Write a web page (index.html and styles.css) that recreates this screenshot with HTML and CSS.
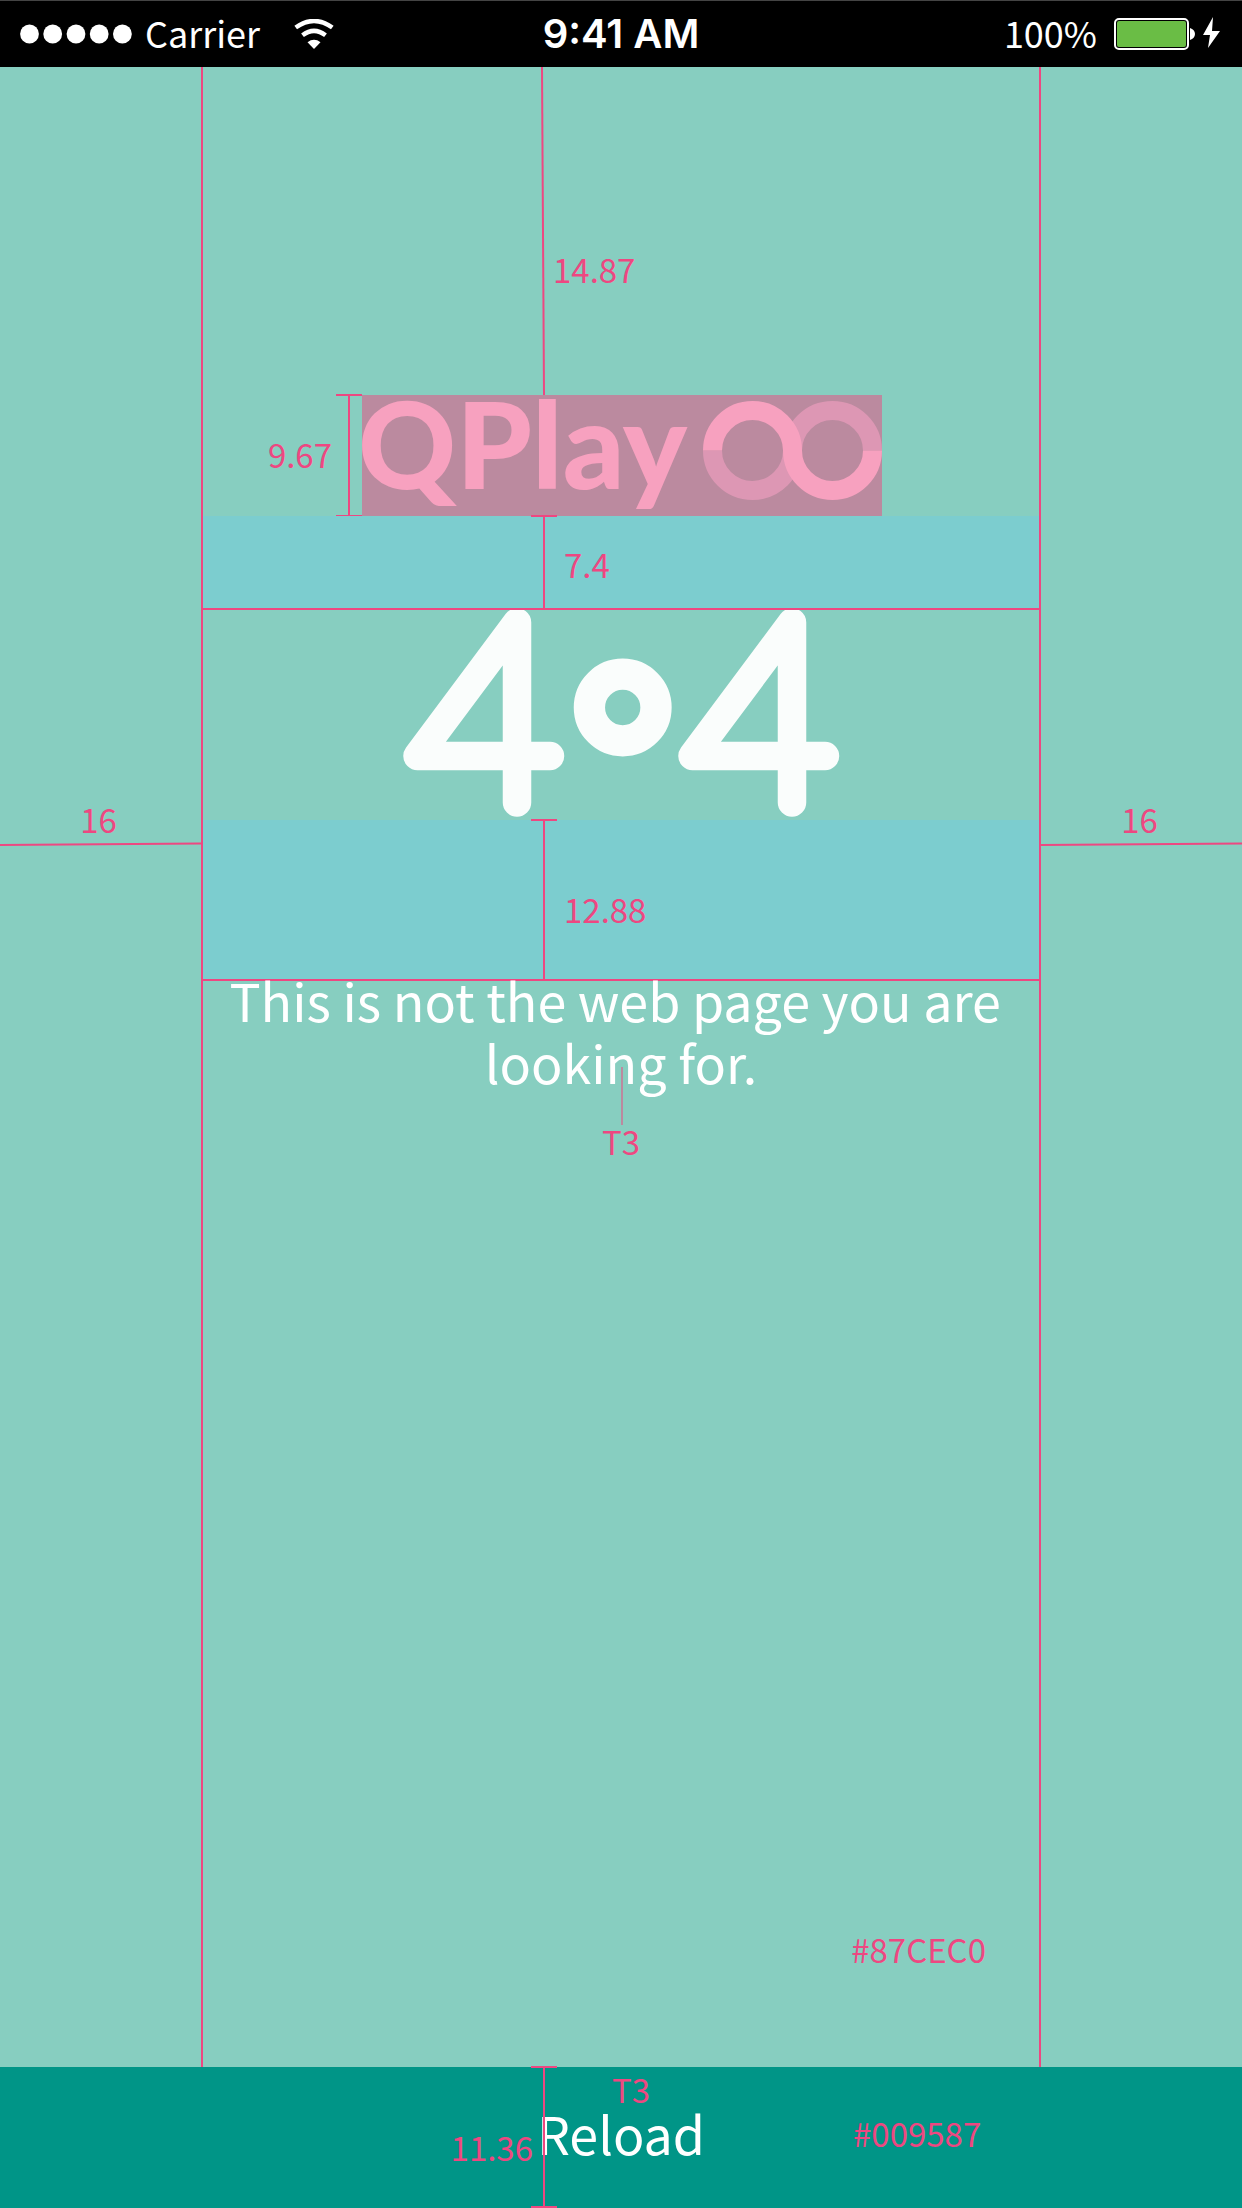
FILE: index.html
```html
<!DOCTYPE html>
<html lang="en">
<head>
<meta charset="utf-8">
<meta name="viewport" content="width=device-width, initial-scale=1">
<title>QPlay 404</title>
<link rel="stylesheet" href="styles.css">
</head>
<body>
<header class="status">
  <div class="status-left">
    <svg class="signal" width="112" height="20" viewBox="0 0 112 20" aria-hidden="true"><circle cx="9.5" cy="10" r="9.4"/><circle cx="32.7" cy="10" r="9.4"/><circle cx="56" cy="10" r="9.4"/><circle cx="79.2" cy="10" r="9.4"/><circle cx="102.4" cy="10" r="9.4"/></svg>
    <span class="carrier">Carrier</span>
    <svg class="wifi" width="40" height="30" viewBox="0 0 40 30" aria-hidden="true"><path d="M1.7 8.5Q20-4.5 38.300 8.500M8.500 16.300Q20 7.500 31.500 16.300" fill="none" stroke="#fff" stroke-width="4.500"/><path d="M13.500 23.200Q20 18.500 26.500 23.200L20 30Z"/></svg>
  </div>
  <time class="clock">9:41 AM</time>
  <div class="status-right">
    <span class="carrier">100%</span>
    <svg class="battery" width="108" height="36" viewBox="0 0 108 36" aria-hidden="true"><rect x="1" y="3" width="73" height="30" rx="4" fill="none" stroke="#fff" stroke-width="2"/><rect x="3" y="5" width="69" height="26" rx="2" fill="#6abd45"/><path d="M76 12c3 1 5 3 5 6s-2 5-5 6Z"/><path d="M99 1L89 19h7l-2 13L106 15h-8Z"/></svg>
  </div>
</header>

<main class="board">
  <aside class="side">
    <span class="note">16</span>
    <svg class="side-line" height="4" viewBox="0 0 201 4" preserveAspectRatio="none" aria-hidden="true"><path d="M0 3L201 1.500"/></svg>
  </aside>

  <div class="column">
    <div class="space-top">
      <svg class="lead" width="4" height="328" viewBox="0 0 4 328" aria-hidden="true"><path d="M1 0L3 328"/></svg>
      <span class="note note-top">14.87</span>
    </div>

    <div class="logo" role="img" aria-label="QPlay">
      <span class="wordmark">QPlay</span>
      <svg class="loops" width="180" height="100" viewBox="0 0 180 100" aria-hidden="true"><g fill="none" stroke-width="19"><path stroke="#dd97b4" d="M10.500 50.500a40 40 0 0 0 80 0a40 40 0 0 1 80 0"/><path stroke="#f7a1bf" d="M10.500 50.500a40 40 0 0 1 80 0a40 40 0 0 0 80 0"/></g></svg>
      <span class="bracket"></span>
      <span class="note note-logo">9.67</span>
    </div>

    <div class="band band-short">
      <span class="post"></span>
      <span class="note note-band">7.4</span>
    </div>

    <div class="art">
      <svg width="438" height="209" viewBox="0 0 438 209" role="img" aria-label="404"><g fill="none" stroke="#fafdfc" stroke-width="28.500" stroke-linecap="round" stroke-linejoin="round"><path d="M148 146H15.500L115 12.500V192.500M423 146H290.500L390 12.500V192.500"/><circle cx="220.700" cy="97.500" r="33.300" stroke-width="31.300"/></g></svg>
    </div>

    <div class="band band-tall">
      <span class="post"></span>
      <span class="note note-band">12.88</span>
    </div>

    <div class="message">
      <h1>This is not the web page you are&nbsp;<br>looking for.</h1>
      <span class="pointer"></span>
      <span class="note note-type">T3</span>
    </div>

    <span class="note swatch">#87CEC0</span>
  </div>

  <aside class="side">
    <span class="note">16</span>
    <svg class="side-line" height="4" viewBox="0 0 201 4" preserveAspectRatio="none" aria-hidden="true"><path d="M0 3L201 1.500"/></svg>
  </aside>
</main>

<footer class="action">
  <button class="reload" type="button">Reload</button>
  <span class="post post-end"></span>
  <span class="note foot-type">T3</span>
  <span class="note foot-height">11.36</span>
  <span class="note foot-color">#009587</span>
</footer>
</body>
</html>
```

FILE: styles.css
```css
:root {
  --pink: #ee4781;
  --mint: #87cec0;
  --sky: #7ccdcf;
  --teal: #009587;
}

* {
  box-sizing: border-box;
}

body {
  margin: 0;
  min-height: 100vh;
  display: flex;
  flex-direction: column;
  background: var(--mint);
  font-family: "Noto Sans CJK SC", "Noto Sans", sans-serif;
}

svg {
  display: block;
  flex: none;
}

/* Status bar */
.status {
  display: grid;
  grid-template-columns: 1fr auto 1fr;
  align-items: center;
  height: 67px;
  padding: 0 20px;
  background: #000;
  border-top: 1px solid #444;
  color: #fff;
}

.status svg {
  fill: #fff;
}

.status-left,
.status-right {
  display: flex;
  align-items: center;
}

.status-left {
  gap: 13px;
}

.status-right {
  justify-content: flex-end;
  gap: 17px;
}

.carrier {
  padding-bottom: 4px;
  font-size: 36px;
  line-height: 60px;
}

.wifi {
  margin-left: 21px;
}

.clock {
  font: 600 40px/60px Inter, sans-serif;
}

/* Measured page */
.board {
  flex: 1;
  display: grid;
  grid-template-columns: 201px 1fr 201px;
}

.note {
  color: var(--pink);
  font-size: 33px;
  line-height: 32px;
  white-space: nowrap;
}

.side {
  padding-top: 736px;
  text-align: center;
}

.side .note {
  display: block;
  padding-right: 4px;
}

.side-line {
  width: 100%;
  margin-top: 7px;
  fill: none;
  stroke: var(--pink);
  stroke-width: 2;
}

.column {
  display: flex;
  flex-direction: column;
  border: solid var(--pink);
  border-width: 0 2px;
}

.space-top,
.logo,
.band,
.message {
  position: relative;
}

.space-top {
  height: 328px;
}

.lead {
  position: absolute;
  left: calc(50% - 80px);
  fill: none;
  stroke: var(--pink);
  stroke-width: 2;
}

.note-top {
  position: absolute;
  left: calc(50% - 68px);
  top: 186px;
}

.logo {
  align-self: center;
  display: flex;
  align-items: flex-start;
  justify-content: space-between;
  width: 520px;
  height: 121px;
  margin-left: 2px;
  background: #bb8a9f;
}

.wordmark {
  margin-left: -4px;
  color: #f7a1bf;
  font: 900 121px/96px Lato, sans-serif;
}

.loops {
  margin-top: 5px;
}

.bracket {
  position: absolute;
  right: 100%;
  top: -1px;
  bottom: -1px;
  width: 26px;
  border: solid var(--pink);
  border-width: 2px 0;
  background: linear-gradient(var(--pink), var(--pink)) center / 2px 100% no-repeat;
}

.note-logo {
  position: absolute;
  right: calc(100% + 30px);
  top: 43px;
}

.band {
  background: var(--sky);
  border-bottom: 2px solid var(--pink);
}

.band-short {
  height: 94px;
}

.band-tall {
  height: 161px;
}

.post {
  position: absolute;
  left: calc(50% - 90px);
  top: -1px;
  bottom: 0;
  width: 26px;
  border-top: 2px solid var(--pink);
  background: linear-gradient(var(--pink), var(--pink)) center / 2px 100% no-repeat;
}

.note-band {
  position: absolute;
  left: calc(50% - 57px);
  bottom: 28px;
}

.band-tall .note-band {
  bottom: 54px;
}

.art {
  display: flex;
  justify-content: center;
  height: 210px;
}

.message {
  margin-top: -12px;
  text-align: center;
}

.message h1 {
  margin: 0;
  color: #fff;
  font-size: 52px;
  font-weight: 400;
  line-height: 62px;
}

.pointer {
  position: absolute;
  left: 50%;
  top: 98px;
  width: 2px;
  height: 58px;
  background: #bb8a9f;
}

.note-type {
  display: block;
  margin-top: 32px;
}

.swatch {
  align-self: flex-end;
  margin: auto 53px 102px 0;
}

/* Footer action */
.action {
  position: relative;
  height: 141px;
  background: var(--teal);
}

.reload {
  width: 100%;
  height: 100%;
  padding: 0 0 10px;
  border: 0;
  background: transparent;
  color: #fff;
  font: 400 52px/62px "Noto Sans CJK SC", "Noto Sans", sans-serif;
}

.post-end {
  border-bottom: 2px solid var(--pink);
}

.foot-type,
.foot-height,
.foot-color {
  position: absolute;
}

.foot-type {
  left: calc(50% - 9px);
  top: 6px;
}

.foot-height {
  right: calc(50% + 88px);
  top: 64px;
}

.foot-color {
  left: calc(50% + 232px);
  top: 50px;
}
```
